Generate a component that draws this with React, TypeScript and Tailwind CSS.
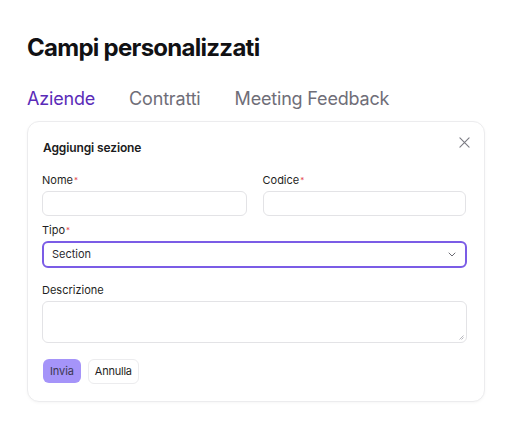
import React from 'react';

const Label: React.FC<{ text: string; required?: boolean }> = ({ text, required }) => (
  <label className="block text-[11px] leading-[14px] text-[#1f1f24] mb-[4px]">
    {text}
    {required && <sup className="text-[#e5484d] text-[8px] ml-[1px] relative top-[-1px]">*</sup>}
  </label>
);

const App: React.FC = () => {
  const tabs = ['Aziende', 'Contratti', 'Meeting Feedback'];

  return (
    <div className="w-[512px] h-[428px] bg-white font-['Inter',sans-serif] overflow-hidden">
      <div className="pl-[27px] pr-[27px] pt-[32px]">
        {/* Header */}
        <h1 className="text-[24px] leading-[32px] font-bold tracking-[-0.03em] text-[#111114]">
          Campi personalizzati
        </h1>

        {/* Tabs */}
        <div className="flex gap-[34px] mt-[23px] h-[24px] items-center">
          {tabs.map((t, i) => (
            <span
              key={t}
              className={
                i === 0
                  ? 'text-[18px] leading-[24px] text-[#5a2bb8] tracking-[-0.01em]'
                  : 'text-[18px] leading-[24px] text-[#6f6e78] tracking-[-0.01em]'
              }
            >
              {t}
            </span>
          ))}
        </div>

        {/* Card */}
        <div className="mt-[10px] w-[458px] rounded-[12px] border border-[#ececee] bg-white shadow-[0_1px_3px_rgba(0,0,0,0.04)] pl-[14px] pr-[17px] pt-[18px] pb-[17px]">
          <div className="flex items-center justify-between h-[16px]">
            <span className="text-[12px] leading-[16px] font-semibold text-[#1b1b20] ml-[1px] tracking-[-0.01em]">
              Aggiungi sezione
            </span>
            <svg width="11" height="11" viewBox="0 0 12 12" className="mr-[-3px] mt-[-12px]" fill="none">
              <path d="M1 1L11 11M11 1L1 11" stroke="#7a7a82" strokeWidth="1.2" strokeLinecap="round" />
            </svg>
          </div>

          {/* Nome / Codice */}
          <div className="grid grid-cols-2 gap-[16px] mt-[17px]">
            <div>
              <Label text="Nome" required />
              <div className="h-[25px] rounded-[6px] border border-[#e3e3e6] bg-white" />
            </div>
            <div>
              <Label text="Codice" required />
              <div className="h-[25px] rounded-[6px] border border-[#e3e3e6] bg-white mr-[1px]" />
            </div>
          </div>

          {/* Tipo */}
          <div className="mt-[7px]">
            <Label text="Tipo" required />
            <div className="h-[27px] rounded-[6px] border-[2px] border-[#7b5ce6] bg-white flex items-center justify-between pl-[8px] pr-[9px]">
              <span className="text-[11px] text-[#2a2a30]">Section</span>
              <svg width="8" height="5" viewBox="0 0 8 5" fill="none">
                <path d="M1 1L4 4L7 1" stroke="#6b6b73" strokeWidth="1" strokeLinecap="round" strokeLinejoin="round" />
              </svg>
            </div>
          </div>

          {/* Descrizione */}
          <div className="mt-[15px]">
            <Label text="Descrizione" />
            <div className="relative h-[42px] rounded-[6px] border border-[#e3e3e6] bg-white">
              <svg width="5" height="5" viewBox="0 0 5 5" className="absolute right-[2px] bottom-[2px]" fill="none">
                <path d="M4.5 0.5L0.5 4.5M4.5 2.5L2.5 4.5" stroke="#9a9aa2" strokeWidth="0.7" />
              </svg>
            </div>
          </div>

          {/* Actions */}
          <div className="flex gap-[7px] mt-[16px] ml-[1px]">
            <button className="h-[24px] px-[7px] rounded-[6px] bg-[#a594f9] text-[11px] tracking-[-0.01em] text-[#3b3850]">
              Invia
            </button>
            <button className="h-[25px] px-[6px] rounded-[6px] border border-[#ececee] bg-white text-[11px] tracking-[-0.02em] text-[#1f1f24]">
              Annulla
            </button>
          </div>
        </div>
      </div>
    </div>
  );
};

export default App;
